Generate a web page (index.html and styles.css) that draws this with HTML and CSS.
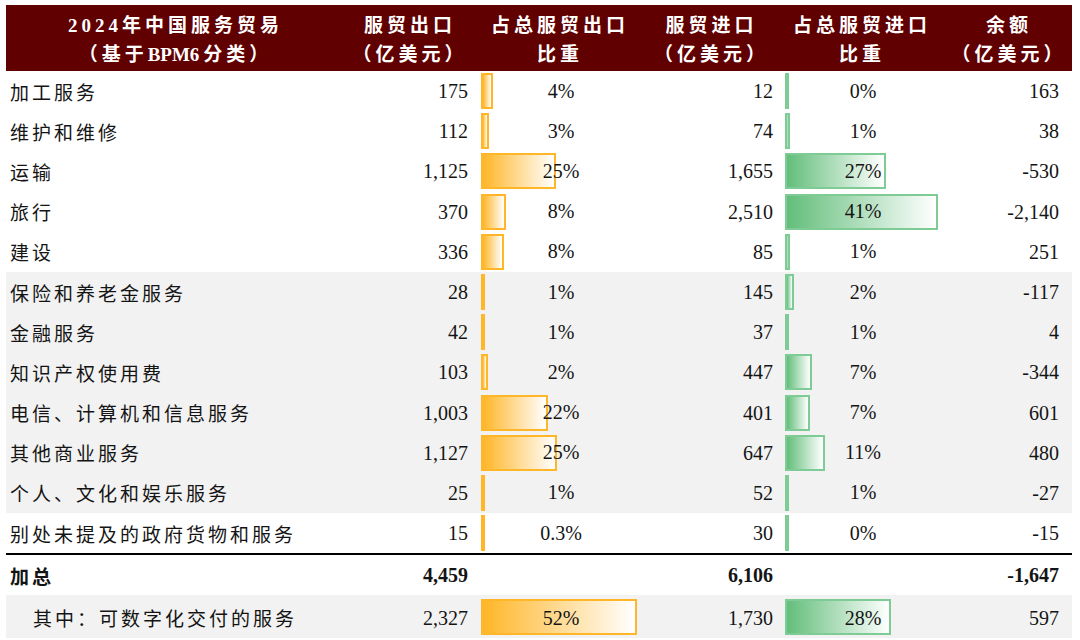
FILE: index.html
```html
<!DOCTYPE html>
<html lang="zh-CN">
<head>
<meta charset="utf-8">
<title>2024年中国服务贸易</title>
<link rel="stylesheet" href="styles.css">
</head>
<body>
<div class="table">
  <div class="hdr">
    <div class="hc">2024年中国服务贸易<br>（基于<span class="lat">BPM6</span>分类）</div>
    <div class="hc">服贸出口<br>（亿美元）</div>
    <div class="hc">占总服贸出口<br>比重</div>
    <div class="hc">服贸进口<br>（亿美元）</div>
    <div class="hc">占总服贸进口<br>比重</div>
    <div class="hc">余额<br>（亿美元）</div>
  </div>

  <div class="row">
    <div class="lab">加工服务</div><div class="num">175</div>
    <div class="pc"><span class="bar ex" style="width:12px"></span><span class="pt">4%</span></div>
    <div class="num n2">12</div>
    <div class="pc"><span class="bar im" style="width:3px"></span><span class="pt">0%</span></div>
    <div class="num n3">163</div>
  </div>
  <div class="row">
    <div class="lab">维护和维修</div><div class="num">112</div>
    <div class="pc"><span class="bar ex" style="width:8px"></span><span class="pt">3%</span></div>
    <div class="num n2">74</div>
    <div class="pc"><span class="bar im" style="width:5px"></span><span class="pt">1%</span></div>
    <div class="num n3">38</div>
  </div>
  <div class="row">
    <div class="lab">运输</div><div class="num">1,125</div>
    <div class="pc"><span class="bar ex" style="width:75px"></span><span class="pt">25%</span></div>
    <div class="num n2">1,655</div>
    <div class="pc"><span class="bar im" style="width:101px"></span><span class="pt">27%</span></div>
    <div class="num n3">-530</div>
  </div>
  <div class="row">
    <div class="lab">旅行</div><div class="num">370</div>
    <div class="pc"><span class="bar ex" style="width:25px"></span><span class="pt">8%</span></div>
    <div class="num n2">2,510</div>
    <div class="pc"><span class="bar im" style="width:153px"></span><span class="pt">41%</span></div>
    <div class="num n3">-2,140</div>
  </div>
  <div class="row">
    <div class="lab">建设</div><div class="num">336</div>
    <div class="pc"><span class="bar ex" style="width:23px"></span><span class="pt">8%</span></div>
    <div class="num n2">85</div>
    <div class="pc"><span class="bar im" style="width:5px"></span><span class="pt">1%</span></div>
    <div class="num n3">251</div>
  </div>
  <div class="row gray">
    <div class="lab">保险和养老金服务</div><div class="num">28</div>
    <div class="pc"><span class="bar ex" style="width:3px"></span><span class="pt">1%</span></div>
    <div class="num n2">145</div>
    <div class="pc"><span class="bar im" style="width:9px"></span><span class="pt">2%</span></div>
    <div class="num n3">-117</div>
  </div>
  <div class="row gray">
    <div class="lab">金融服务</div><div class="num">42</div>
    <div class="pc"><span class="bar ex" style="width:3px"></span><span class="pt">1%</span></div>
    <div class="num n2">37</div>
    <div class="pc"><span class="bar im" style="width:3px"></span><span class="pt">1%</span></div>
    <div class="num n3">4</div>
  </div>
  <div class="row gray">
    <div class="lab">知识产权使用费</div><div class="num">103</div>
    <div class="pc"><span class="bar ex" style="width:7px"></span><span class="pt">2%</span></div>
    <div class="num n2">447</div>
    <div class="pc"><span class="bar im" style="width:27px"></span><span class="pt">7%</span></div>
    <div class="num n3">-344</div>
  </div>
  <div class="row gray">
    <div class="lab">电信、计算机和信息服务</div><div class="num">1,003</div>
    <div class="pc"><span class="bar ex" style="width:67px"></span><span class="pt">22%</span></div>
    <div class="num n2">401</div>
    <div class="pc"><span class="bar im" style="width:25px"></span><span class="pt">7%</span></div>
    <div class="num n3">601</div>
  </div>
  <div class="row gray">
    <div class="lab">其他商业服务</div><div class="num">1,127</div>
    <div class="pc"><span class="bar ex" style="width:76px"></span><span class="pt">25%</span></div>
    <div class="num n2">647</div>
    <div class="pc"><span class="bar im" style="width:40px"></span><span class="pt">11%</span></div>
    <div class="num n3">480</div>
  </div>
  <div class="row gray">
    <div class="lab">个人、文化和娱乐服务</div><div class="num">25</div>
    <div class="pc"><span class="bar ex" style="width:2px"></span><span class="pt">1%</span></div>
    <div class="num n2">52</div>
    <div class="pc"><span class="bar im" style="width:3px"></span><span class="pt">1%</span></div>
    <div class="num n3">-27</div>
  </div>
  <div class="row last">
    <div class="lab">别处未提及的政府货物和服务</div><div class="num">15</div>
    <div class="pc"><span class="bar ex" style="width:2px"></span><span class="pt">0.3%</span></div>
    <div class="num n2">30</div>
    <div class="pc"><span class="bar im" style="width:3px"></span><span class="pt">0%</span></div>
    <div class="num n3">-15</div>
  </div>

  <div class="row total">
    <div class="lab">加总</div><div class="num">4,459</div>
    <div class="pc"></div>
    <div class="num n2">6,106</div>
    <div class="pc"></div>
    <div class="num n3">-1,647</div>
  </div>
  <div class="row gray sub">
    <div class="lab">其中：可数字化交付的服务</div><div class="num">2,327</div>
    <div class="pc"><span class="bar ex" style="width:156px"></span><span class="pt">52%</span></div>
    <div class="num n2">1,730</div>
    <div class="pc"><span class="bar im" style="width:106px"></span><span class="pt">28%</span></div>
    <div class="num n3">597</div>
  </div>
</div>
</body>
</html>
```
FILE: styles.css
```css
* { box-sizing: border-box; }
html, body { margin: 0; padding: 0; background: #ffffff; }
body {
  font-family: "Liberation Serif", "Noto Sans CJK SC", serif;
  color: #141414;
}
.table {
  width: 1066px;
  margin: 5px 0 0 6px;
}
.hdr, .row {
  display: grid;
  grid-template-columns: 339px 130px 170px 133px 168px 126px;
}
.hdr {
  background: #600000;
  height: 66px;
  align-items: center;
}
.hc {
  color: #ffffff;
  font-family: "Liberation Serif", "Noto Sans CJK SC", serif;
  font-weight: bold;
  font-size: 19px;
  line-height: 29px;
  letter-spacing: 4px;
  text-align: center;
  padding-top: 3px;
}
.hc .lat { letter-spacing: 0; margin-right: 4px; }
.row {
  height: 40.2px;
  align-items: center;
  font-size: 20px;
}
.row.gray { background: #f2f2f2; }
.row.last { border-bottom: 2px solid #000000; height: 42px; }
.row.total { height: 40px; font-weight: bold; }
.row.sub { height: 43px; }
.lab {
  font-family: "Noto Sans CJK SC", sans-serif;
  font-size: 19px;
  letter-spacing: 3px;
  padding-left: 4px;
  white-space: nowrap;
}
.total .lab { font-weight: bold; }
.sub .lab { padding-left: 27px; padding-top: 2px; }
.num {
  text-align: right;
  padding-right: 7px;
  padding-top: 1px;
}
.sub .num { padding-top: 3px; }
.num.n2 { padding-right: 5px; }
.num.n3 { padding-right: 13px; }
.pc {
  position: relative;
  height: 100%;
  display: flex;
  align-items: center;
  justify-content: center;
}
.pt {
  position: relative;
  padding-top: 0;
  padding-left: 2px;
}
.sub .pt { padding-top: 3px; }
.bar {
  position: absolute;
  top: 2px;
  left: 6px;
  height: 36px;
  min-width: 2px;
  border: 2px solid #ffb628;
  background: linear-gradient(to right, #ffb628, #ffffff);
}
.bar.im {
  left: 7px;
  border-color: #7ecb95;
  background: linear-gradient(to right, #63be7b, #ffffff);
}
.sub .bar { top: 4px; height: 36px; }
```
